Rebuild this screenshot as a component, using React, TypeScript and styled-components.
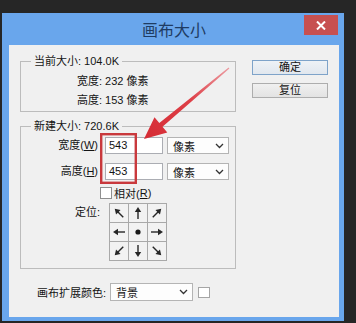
import styled, { createGlobalStyle } from 'styled-components';

const GlobalStyle = createGlobalStyle`
  html, body {
    margin: 0;
    padding: 0;
    background: #262626;
  }
  body {
    font-family: "Liberation Sans", "Noto Sans CJK SC", sans-serif;
    font-size: 11px;
    color: #141414;
  }
  * {
    box-sizing: border-box;
  }
`;

const Screen = styled.div`
  position: relative;
  width: 356px;
  height: 323px;
  overflow: hidden;
  background: #262626;
  padding: 13px 0 0 2px;
`;

const Dialog = styled.div`
  width: 342px;
  height: 308px;
  background: #69a6ec;
  padding: 0 5px 4px 7px;
  display: flex;
  flex-direction: column;
`;

const TitleBar = styled.div`
  height: 32px;
  display: grid;
  grid-template-columns: 1fr auto 1fr;
`;

const Title = styled.div`
  grid-column: 2;
  align-self: center;
  font-family: "Noto Sans CJK SC", sans-serif;
  font-size: 16px;
  line-height: 20px;
  color: #1f3c63;
`;

const CloseButton = styled.div`
  justify-self: end;
  align-self: start;
  margin: 2px 1px 0 0;
  width: 34px;
  height: 20px;
  background: #c75050;
  display: flex;
  align-items: center;
  justify-content: center;
`;

const Body = styled.div`
  flex: 1;
  background: #f0f0f0;
  display: flex;
  padding: 9px 11px 0 11px;
`;

const LeftColumn = styled.div`
  width: 216px;
  display: flex;
  flex-direction: column;
  gap: 7px;
`;

const Group = styled.fieldset`
  margin: 0;
  padding: 0;
  min-width: 0;
  border: 1px solid #bcbcbc;
`;

const Legend = styled.legend`
  margin-left: 10px;
  padding: 0 3px;
  line-height: 14px;
`;

const InfoRows = styled.div`
  padding: 4px 0 1px 56px;
`;

const InfoRow = styled.div`
  line-height: 19px;
  white-space: nowrap;
`;

const NewSizeBody = styled.div`
  display: flex;
  flex-direction: column;
  padding: 4px 0 7px 0;
`;

const SizeRow = styled.div<{ $gap?: number }>`
  display: flex;
  align-items: center;
  height: 17px;
  margin-top: ${({ $gap }) => $gap ?? 0}px;
`;

const FieldLabel = styled.div<{ $width: number }>`
  width: ${({ $width }) => $width}px;
  text-align: right;
  white-space: nowrap;
  line-height: 17px;
`;

const TextBox = styled.div`
  width: 58px;
  height: 17px;
  margin-left: 7px;
  border: 1px solid #abadb3;
  background: #ffffff;
  padding-left: 3px;
  line-height: 15px;
`;

const Combo = styled.div<{ $width: number }>`
  width: ${({ $width }) => $width}px;
  height: 100%;
  border: 1px solid #b4b4b4;
  background: #fdfdfd;
  display: flex;
  align-items: center;
  justify-content: space-between;
  padding: 0 4px 0 5px;
`;

const UnitCombo = styled(Combo)`
  margin-left: 4px;
`;

const CheckRow = styled.div`
  display: flex;
  align-items: center;
  height: 13px;
  margin-top: 6px;
  padding-left: 79px;
`;

const CheckBox = styled.div`
  width: 12px;
  height: 12px;
  border: 1px solid #8f8f8f;
  background: #ffffff;
  margin-right: 2px;
`;

const AnchorRow = styled.div`
  display: flex;
  align-items: flex-start;
  margin-top: 4px;
`;

const AnchorLabel = styled.div`
  width: 79px;
  margin-right: 9px;
  text-align: right;
  line-height: 18px;
`;

const AnchorGrid = styled.div`
  display: grid;
  grid-template-columns: repeat(3, 18px);
  grid-template-rows: repeat(3, 18px);
  gap: 1px;
  padding: 1px;
  background: #a9a9a9;
`;

const AnchorCell = styled.div`
  background: #f2f2f2;
  display: flex;
  align-items: center;
  justify-content: center;
`;

const ColorRow = styled.div`
  display: flex;
  align-items: center;
  height: 18px;
  margin-top: 7px;
  padding-left: 17px;
`;

const ColorLabel = styled.div`
  margin-right: 4px;
  white-space: nowrap;
`;

const Swatch = styled.div`
  width: 12px;
  height: 11px;
  margin-left: 5px;
  border: 1px solid #a5a5a5;
  background: #ffffff;
`;

const ButtonColumn = styled.div`
  margin-left: 16px;
  padding-top: 6px;
  display: flex;
  flex-direction: column;
  gap: 8px;
`;

const Button = styled.div<{ $primary?: boolean }>`
  width: 76px;
  height: 15px;
  border: 1px solid ${({ $primary }) => ($primary ? '#7ea3c9' : '#adadad')};
  background: ${({ $primary }) =>
    $primary ? 'linear-gradient(#eef2f6, #e1e7ee)' : 'linear-gradient(#f0f0f0, #e3e3e3)'};
  display: flex;
  align-items: center;
  justify-content: center;
  line-height: 13px;
`;

const Annotation = styled.svg`
  position: absolute;
  left: 0;
  top: 0;
  pointer-events: none;
`;

const Chevron = () => (
  <svg width="9" height="6" viewBox="0 0 9 6">
    <path d="M1 1 L4.5 4.5 L8 1" fill="none" stroke="#333" strokeWidth="1.3" />
  </svg>
);

const CloseIcon = () => (
  <svg width="10" height="9" viewBox="0 0 10 9">
    <path d="M1 0.5 L9 8.5 M9 0.5 L1 8.5" stroke="#fff" strokeWidth="2" />
  </svg>
);

const AnchorArrow = ({ angle }: { angle: number }) => (
  <svg width="18" height="18" viewBox="0 0 18 18">
    <g transform={`rotate(${angle} 9 9)`}>
      <line x1="9" y1="15" x2="9" y2="6.5" stroke="#262626" strokeWidth="1.4" />
      <polygon points="9,3 5.8,8 12.2,8" fill="#262626" />
    </g>
  </svg>
);

const anchors: (number | null)[] = [-45, 0, 45, -90, null, 90, -135, 180, 135];

export default function App() {
  return (
    <>
      <GlobalStyle />
      <Screen>
        <Dialog>
          <TitleBar>
            <Title>画布大小</Title>
            <CloseButton>
              <CloseIcon />
            </CloseButton>
          </TitleBar>
          <Body>
            <LeftColumn>
              <Group>
                <Legend>当前大小: 104.0K</Legend>
                <InfoRows>
                  <InfoRow>宽度: 232 像素</InfoRow>
                  <InfoRow>高度: 153 像素</InfoRow>
                </InfoRows>
              </Group>

              <Group>
                <Legend>新建大小: 720.6K</Legend>
                <NewSizeBody>
                  <SizeRow>
                    <FieldLabel $width={77}>
                      宽度(<u>W</u>)
                    </FieldLabel>
                    <TextBox>543</TextBox>
                    <UnitCombo $width={62}>
                      像素
                      <Chevron />
                    </UnitCombo>
                  </SizeRow>
                  <SizeRow $gap={9}>
                    <FieldLabel $width={77}>
                      高度(<u>H</u>)
                    </FieldLabel>
                    <TextBox>453</TextBox>
                    <UnitCombo $width={62}>
                      像素
                      <Chevron />
                    </UnitCombo>
                  </SizeRow>
                  <CheckRow>
                    <CheckBox />
                    相对(<u>R</u>)
                  </CheckRow>
                  <AnchorRow>
                    <AnchorLabel>定位:</AnchorLabel>
                    <AnchorGrid>
                      {anchors.map((a, i) => (
                        <AnchorCell key={i}>
                          {a === null ? (
                            <svg width="6" height="6" viewBox="0 0 6 6">
                              <circle cx="3" cy="3" r="2.6" fill="#1a1a1a" />
                            </svg>
                          ) : (
                            <AnchorArrow angle={a} />
                          )}
                        </AnchorCell>
                      ))}
                    </AnchorGrid>
                  </AnchorRow>
                </NewSizeBody>
              </Group>

              <ColorRow>
                <ColorLabel>画布扩展颜色:</ColorLabel>
                <Combo $width={83}>
                  背景
                  <Chevron />
                </Combo>
                <Swatch />
              </ColorRow>
            </LeftColumn>

            <ButtonColumn>
              <Button $primary>确定</Button>
              <Button>复位</Button>
            </ButtonColumn>
          </Body>
        </Dialog>

        <Annotation width="356" height="323" viewBox="0 0 356 323">
          <defs>
            <linearGradient id="arrowShade" x1="229" y1="68" x2="144" y2="139" gradientUnits="userSpaceOnUse">
              <stop offset="0" stopColor="#ec9aa0" />
              <stop offset="0.45" stopColor="#de4048" />
              <stop offset="1" stopColor="#d52b34" />
            </linearGradient>
          </defs>
          <polygon
            points="229.4,68.5 162.5,126.8 167.3,132.6 144,139 154.5,117.2 159.3,123.0 228.6,67.5"
            fill="url(#arrowShade)"
          />
          <rect x="101.2" y="134.2" width="34.6" height="48.6" fill="none" stroke="#c9393d" strokeWidth="2.4" />
        </Annotation>
      </Screen>
    </>
  );
}
